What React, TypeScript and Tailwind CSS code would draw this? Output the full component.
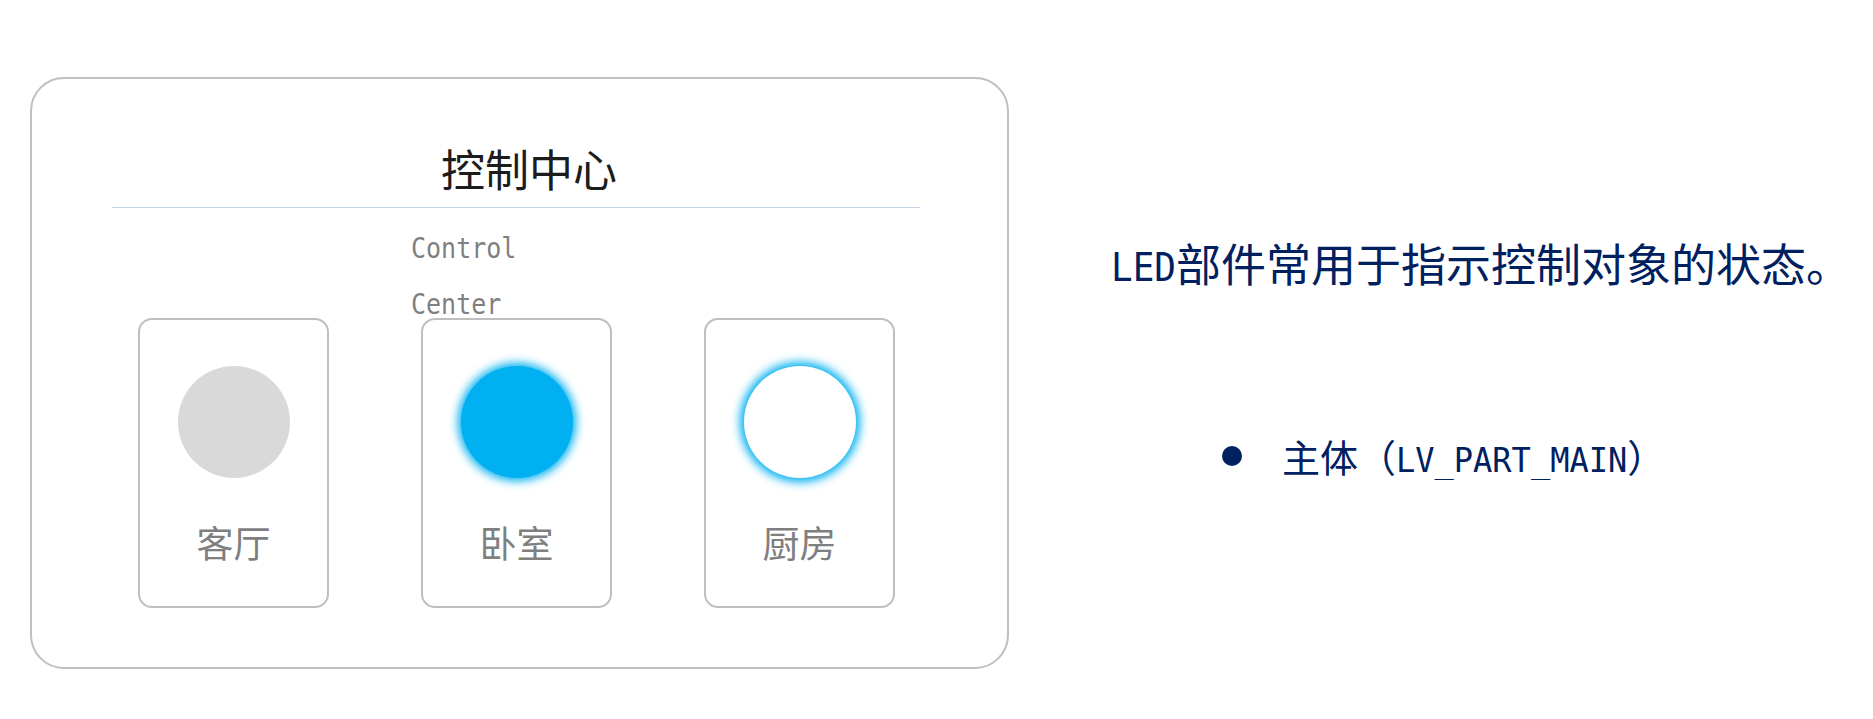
import React from "react";

const cards = [
  { label: "客厅", circle: "bg-[#d9d9d9]" },
  { label: "卧室", circle: "bg-[#00b0f0] shadow-[0_0_10px_3px_#00b0f0]" },
  { label: "厨房", circle: "bg-white shadow-[0_0_10px_4px_#00b0f0]" },
];

export default function App() {
  return (
    <div className="w-[1873px] h-[719px] bg-white flex font-['Noto_Sans_CJK_SC',sans-serif] overflow-hidden">
      <div className="ml-[30px] mt-[77px] w-[979px] h-[592px] shrink-0 border-2 border-[#bfbfbf] rounded-[34px] flex flex-col">
        <div className="mt-[67px] ml-[80px] w-[808px] pl-[26px] text-center text-[44px] leading-[44px] text-[#1c1c1c]">
          控制中心
        </div>
        <div className="mt-[17px] ml-[80px] w-[808px] h-px bg-[#c6d5ec]" />
        <div className="mt-[14px] ml-[379px] font-['DejaVu_Sans_Mono',monospace] text-[25px] leading-[56px] text-[#7f7f7f]">
          <div className="scale-y-[1.15] origin-[0_37px]">Control</div>
          <div className="scale-y-[1.15] origin-[0_37px]">Center</div>
        </div>
        <div className="-mt-[16px] ml-[106px] flex gap-[92px]">
          {cards.map((c) => (
            <div
              key={c.label}
              className="w-[191px] h-[290px] border-2 border-[#bfbfbf] rounded-[14px] flex flex-col items-center pt-[46px]"
            >
              <div className={`w-[112px] h-[112px] rounded-full ${c.circle}`} />
              <div className="mt-[46px] text-[37px] leading-[37px] text-[#7f7f7f]">{c.label}</div>
            </div>
          ))}
        </div>
      </div>
      <div className="ml-[102px] mt-[240px] flex flex-col text-[#002060]">
        <div className="text-[45px] leading-[45px] whitespace-nowrap">
          <span className="inline-block scale-y-[1.1] origin-bottom font-['DejaVu_Sans_Mono','Noto_Sans_CJK_SC',monospace] text-[36px]">
            LED
          </span>
          部件常用于指示控制对象的状态。
        </div>
        <div className="mt-[145px] ml-[111px] flex items-center">
          <div className="w-[20px] h-[20px] rounded-full bg-[#002060] -mt-[6px]" />
          <div className="ml-[40px] text-[38px] leading-[38px] whitespace-nowrap">
            主体（
            <span className="inline-block scale-y-[1.06] origin-bottom font-['DejaVu_Sans_Mono','Noto_Sans_CJK_SC',monospace] text-[32px]">
              LV_PART_MAIN
            </span>
            ）
          </div>
        </div>
      </div>
    </div>
  );
}
